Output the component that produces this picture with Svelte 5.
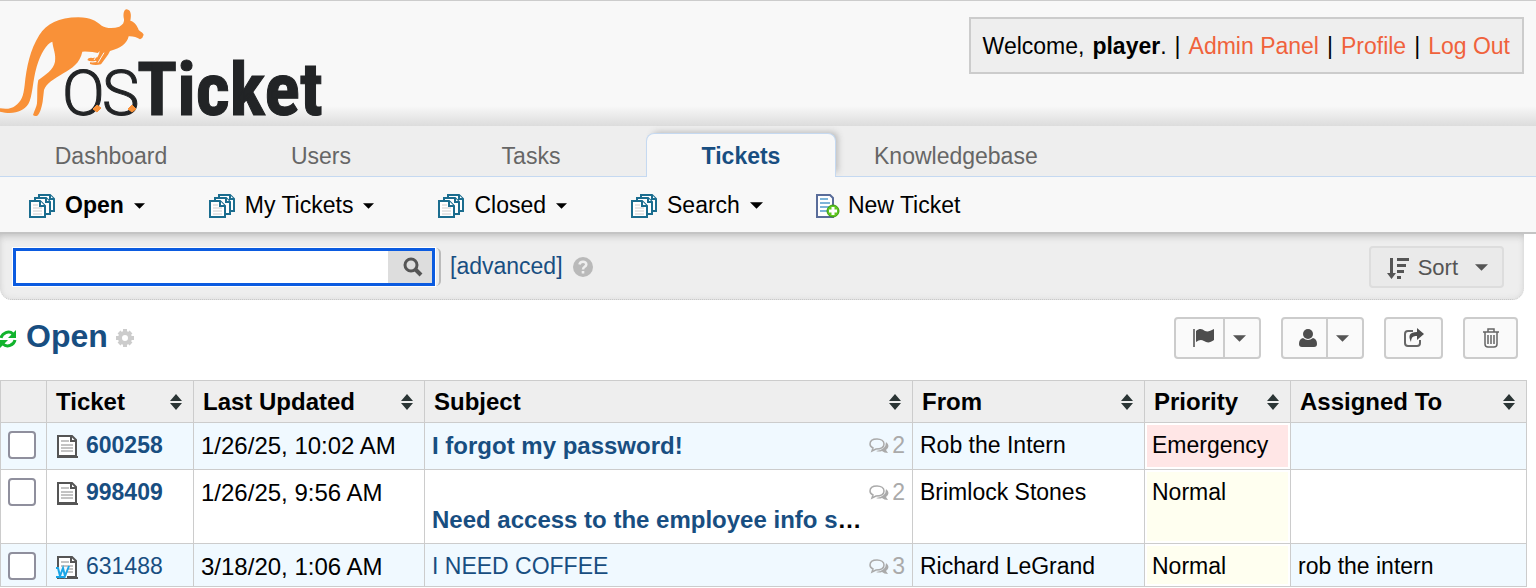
<script>
  // Staff panel: ticket queue view.
  const tabs = ["Dashboard", "Users", "Tasks", "Tickets", "Knowledgebase"];
  const activeTab = "Tickets";

  const queues = [
    { name: "Open", active: true },
    { name: "My Tickets" },
    { name: "Closed" },
    { name: "Search", big: true },
  ];

  const columns = [
    { key: "ticket", label: "Ticket" },
    { key: "updated", label: "Last Updated" },
    { key: "subject", label: "Subject" },
    { key: "from", label: "From" },
    { key: "priority", label: "Priority" },
    { key: "assigned", label: "Assigned To" },
  ];

  const tickets = [
    { number: "600258", updated: "1/26/25, 10:02 AM", subject: "I forgot my password!", thread: 2, from: "Rob the Intern", priority: "Emergency", assigned: "", unanswered: true },
    { number: "998409", updated: "1/26/25, 9:56 AM", subject: "Need access to the employee info s", cut: true, thread: 2, from: "Brimlock Stones", priority: "Normal", assigned: "", unanswered: true },
    { number: "631488", updated: "3/18/20, 1:06 AM", subject: "I NEED COFFEE", thread: 3, from: "Richard LeGrand", priority: "Normal", assigned: "rob the intern", unanswered: false },
  ];

  let query = $state("");
  let selected = $state([]);
</script>

{#snippet caret(big)}
  <svg class="caret" class:big viewBox="0 0 12 6" aria-hidden="true"><path d="M0 0h12L6 6z" fill="currentColor" /></svg>
{/snippet}

{#snippet pages()}
  <svg class="queue-icon" viewBox="0 0 26 26" aria-hidden="true">
    <g fill="#fff" stroke="#1b6d8f" stroke-width="2">
      <path d="M10 2h11l4 4v12H10z" />
      <path d="M21 2v4h4" />
      <path d="M6 5h11l4 4v12H6z" />
      <path d="M17 5v4h4" />
      <path d="M1 8h10l5 5v11H1z" />
      <path d="M11 8v5h5" />
    </g>
    <path d="M4 12h5M4 15h9M4 18h9M4 21h9" stroke="#ccc" />
  </svg>
{/snippet}

<header>
  <a class="logo" href="#home" aria-label="osTicket">
    <svg width="325" height="120" viewBox="0 1 325 120">
      <svg width="325" height="120" viewBox="0 0 975 360">
        <path
          fill="#f99138"
          d="M0 325Q30 330 45 318C65 303 70 290 74 255C80 200 90 150 118 105C140 72 175 52 235 52C275 53 285 62 305 77C320 86 340 86 358 80Q374 72 372 58C368 42 372 28 380 28C392 30 395 42 391 62C405 66 412 78 416 90C424 96 430 100 431 104Q429 114 420 118C410 112 398 108 386 109C382 130 362 145 330 153C325 165 312 180 303 193Q285 198 270 192L270 187Q282 188 290 186L288 182Q270 186 262 180Q264 172 278 174L292 172L298 160Q275 154 247 155C240 190 215 205 190 220C160 238 140 250 132 270L128 305C124 325 120 340 112 347Q104 350 99 345C104 330 110 320 111 310C113 290 110 260 115 240C135 225 160 210 165 185C168 160 160 150 157 125C140 130 122 160 110 200C98 240 98 290 85 312C70 335 40 345 0 335Z"
        />
        <path d="M298 155L282 180M312 158L294 188" stroke="#f8f8f8" stroke-width="3" fill="none" />
      </svg>
      <text class="logo-thin" x="62" y="115">O</text>
      <text class="logo-thin" x="102" y="115">S</text>
      <text class="logo-bold" x="137" y="115">Ticket</text>
      <path d="M97 105l4 3-4 4-4-3zM132 105l4 4-4 3-4-3z" fill="#f99138" stroke="#f99138" />
    </svg>
  </a>
  <div class="account">
    <span>Welcome,</span>
    <span><strong>player</strong>.</span>
    <span>|</span>
    <a href="#admin">Admin Panel</a>
    <span>|</span>
    <a href="#profile">Profile</a>
    <span>|</span>
    <a href="#logout">Log Out</a>
  </div>
</header>

<nav class="tabs">
  {#each tabs as tab}
    <a href="#{tab}" class:active={tab === activeTab}>{tab}</a>
  {/each}
</nav>

<nav class="queues">
  {#each queues as q}
    <a href="#{q.name}" class:current={q.active}>
      {@render pages()}<span>{q.name}</span>{@render caret(q.big)}
    </a>
  {/each}
  <a class="new" href="#new">
    <svg class="queue-icon" viewBox="0 0 26 26" aria-hidden="true">
      <path d="M2 2h13l3 3v19H2z" fill="#fff" stroke="#5a6d9a" stroke-width="2" />
      <path d="M5 6h8M5 10h10M5 14h9M5 18h7" stroke="#7db4d8" stroke-width="2" />
      <circle cx="18" cy="18" r="6" fill="#5fc71e" stroke="#3d9a10" />
      <path d="M18 14v8M14 18h8" stroke="#fff" stroke-width="3" />
    </svg>
    <span>New Ticket</span>
  </a>
</nav>

<main>
  <section class="search-bar">
    <form class="search-box" onsubmit={(e) => e.preventDefault()}>
      <div class="field">
        <input type="text" aria-label="Search tickets" bind:value={query} />
        <button type="submit" aria-label="Search">
          <svg width="20" height="20" viewBox="0 0 20 20"><circle cx="8" cy="8" r="6" fill="none" stroke="#555" stroke-width="3" /><path d="M12 12l6 6" stroke="#555" stroke-width="4" /></svg>
        </button>
      </div>
    </form>
    <a href="#advanced">[advanced]</a>
    <svg class="help" width="20" height="20" viewBox="0 0 20 20" aria-hidden="true">
      <circle cx="10" cy="10" r="10" fill="#b9b9b9" />
      <path d="M6.500 7.500C7 3.500 13.500 4 13.300 7.500C13 10 10 9.500 10 12.500" fill="none" stroke="#eee" stroke-width="2.500" />
      <path d="M8.700 14h2.600v2.500H8.700z" fill="#eee" />
    </svg>
    <button class="sort">
      <svg width="22" height="24" viewBox="0 0 22 24" aria-hidden="true">
        <path d="M3 2h3v15h3l-4.500 6L0 17h3z" fill="#555" />
        <path d="M10 2h12v3H10zM10 8h9v3h-9zM10 14h7v3h-7zM10 20h4v3h-4z" fill="#555" />
      </svg>
      <span>Sort</span>{@render caret(true)}
    </button>
  </section>

  <section class="title-bar">
    <a class="refresh" href="#refresh" aria-label="Refresh">
      <svg width="18" height="20" viewBox="0 0 18 20">
        <path d="M1 9C2 4 9 1 13 5M15 11C14 16 7 19 3 15" fill="none" stroke="#12b32d" stroke-width="3" />
        <path d="M16 1v8H8zM0 19v-8h8z" fill="#12b32d" />
      </svg>
    </a>
    <h2><a href="#open">Open</a></h2>
    <svg class="gear" width="18" height="18" viewBox="0 0 18 18" aria-hidden="true">
      <circle cx="9" cy="9" r="5" fill="none" stroke="#ccc" stroke-width="4" />
      <path d="M9 0v4M9 14v4M0 9h4M14 9h4M3 3l3 3M12 12l3 3M3 15l3-3M12 6l3-3" stroke="#ccc" stroke-width="4" />
    </svg>
    <div class="actions">
      <div class="group">
        <button class="flag" aria-label="Change status">
          <svg width="22" height="20" viewBox="0 0 22 20"><path d="M1 1h2v18H1z" fill="#777" /><path d="M4 3C8 0 10 1 13 3C16 4 18 3 22 1V12C18 15 15 15 12 13C9 11 7 12 4 14z" fill="#4d4d4d" /></svg>
        </button>
        <button class="drop" aria-label="Status options">{@render caret(true)}</button>
      </div>
      <div class="group">
        <button class="user" aria-label="Assign">
          <svg width="18" height="20" viewBox="0 0 18 20"><circle cx="9" cy="6" r="5" fill="#4d4d4d" /><path d="M4 10Q9 14 14 10Q18 11 18 16Q18 19 15 19H3Q0 19 0 16Q0 11 4 10z" fill="#4d4d4d" /></svg>
        </button>
        <button class="drop" aria-label="Assign options">{@render caret(true)}</button>
      </div>
      <div class="group">
        <button class="share" aria-label="Transfer">
          <svg width="20" height="20" viewBox="0 0 20 20"><path d="M9 3H4Q1 3 1 6V15Q1 18 4 18H13Q16 18 16 15V12" fill="none" stroke="#666" stroke-width="2" /><path d="M13 0l7 6-7 6V8Q7 7 7 14Q2 4 13 4z" fill="#4d4d4d" /></svg>
        </button>
      </div>
      <div class="group">
        <button class="trash" aria-label="Delete">
          <svg width="16" height="20" viewBox="0 0 16 20"><path d="M0 4h16M5 4V1h6v3M2 4v12q0 3 3 3h6q3 0 3-3V4M5 7v9M8 7v9M11 7v9" fill="none" stroke="#666" stroke-width="1.500" /></svg>
        </button>
      </div>
    </div>
  </section>

  <table>
    <colgroup>
      <col class="c-check" />
      {#each columns as c}<col class="c-{c.key}" />{/each}
    </colgroup>
    <thead>
      <tr>
        <th></th>
        {#each columns as c}
          <th>
            <div class="head">
              {c.label}
              <svg width="12" height="16" viewBox="0 0 12 16" aria-hidden="true"><path d="M0 7l6-7 6 7zM0 9h12l-6 7z" fill="#2b3535" /></svg>
            </div>
          </th>
        {/each}
      </tr>
    </thead>
    <tbody>
      {#each tickets as t}
        <tr class:unanswered={t.unanswered}>
          <td class="check"><input type="checkbox" aria-label="Select ticket {t.number}" value={t.number} bind:group={selected} /></td>
          <td>
            <a class="number" href="#{t.number}">
              <svg width="24" height="24" viewBox="0 0 24 24" aria-hidden="true">
                <path d="M2 2h14l4 4v16H2z" fill="#fff" stroke="#555" stroke-width="2" />
                <path d="M1 23h21" stroke="#555" stroke-width="2" />
                <path d="M15 2v5h5" fill="none" stroke="#555" stroke-width="2" />
                <path d="M5 7h8M5 11h12M5 14h12M5 17h12" stroke="#888" />
                {#if !t.unanswered}
                  <path d="M0 12h11v11H0z" fill="#f0f9ff" />
                  <path d="M-1 13h3l2 8 3-8 2 8 4-10M0 22h9" fill="none" stroke="#1aa5e6" stroke-width="2" />
                {/if}
              </svg>
              {t.number}
            </a>
          </td>
          <td class="updated">{t.updated}</td>
          <td>
            <div class="subject" class:cut={t.cut}>
              <span class="text"><a href="#{t.number}">{t.subject}</a>{#if t.cut}…{/if}</span>
              <span class="thread">
                <svg width="20" height="18" viewBox="0 0 20 18" aria-hidden="true">
                  <path d="M17 5Q22 9 17 13L19 16Q15 16 13 14Q10 15 7 14Q17 13 17 5z" fill="#aaa" />
                  <path d="M8 2C3 2 1 4 1 7C1 9 2 10 4 11L3 14L7 12C12 12 15 10 15 7C15 4 12 2 8 2z" fill="none" stroke="#aaa" stroke-width="1.500" />
                </svg>
                {t.thread}
              </span>
            </div>
          </td>
          <td>{t.from}</td>
          <td class="priority {t.priority.toLowerCase()}">{t.priority}</td>
          <td>{t.assigned}</td>
        </tr>
      {/each}
    </tbody>
  </table>
</main>

<style>
  :global(body) { background: #fff; color: #000; font: 23px/27px "Liberation Sans", Arial, sans-serif; }
  a { color: #184e81; text-decoration: none; }
  button { font: inherit; color: #555; cursor: pointer; padding: 0; border: 0; }
  svg { flex: none; }

  header { display: flex; justify-content: space-between; align-items: flex-start; height: 125px; padding-right: 12px; border-top: 1px solid #ccc; background: linear-gradient(#f8f8f8 84%, #dcdcdc); }
  .logo svg { display: block; overflow: visible; }
  .logo-thin { font: 300 63px Roboto, sans-serif; fill: #222426; stroke: #222426; }
  .logo-bold { font: bold 74px "Roboto Condensed", Roboto, sans-serif; fill: #222426; stroke: #222426; }
  .account { display: flex; gap: 8px; margin-top: 16px; padding: 14px 12px 12px; border: 2px solid #ccc; background: #eee; white-space: nowrap; }
  .account a { color: #f0623c; }

  .tabs { display: flex; gap: 20px; height: 43px; padding: 7px 16px 0; background: #eee; border-bottom: 1px solid #c5d9f1; }
  .tabs a { min-width: 190px; box-sizing: border-box; padding: 10px 18px 0; text-align: center; color: #666; }
  .tabs a.active { height: 44px; padding-top: 9px; border: 1px solid #c5d9f1; border-bottom: 0; border-radius: 8px 8px 0 0; background: #f8f8f8; color: #184e81; font-weight: bold; box-shadow: 4px -3px 6px -2px #bbb; clip-path: inset(-10px -10px 0 -10px); }

  .queues { display: flex; gap: 64px; height: 53px; padding: 2px 29px 0; align-items: center; background: #f8f8f8; border-bottom: 2px solid #c4c4c4; }
  .queues a { display: flex; align-items: center; gap: 10px; color: #000; white-space: nowrap; }
  .queues .current { font-weight: bold; }
  .queues .new { margin-left: -12px; gap: 7px; }
  .queue-icon { width: 26px; height: 26px; }
  .caret { width: 11px; height: 6px; }
  .caret.big { width: 13px; height: 7px; }

  main { padding-right: 9px; }
  .search-bar { display: flex; align-items: center; height: 65px; margin-right: 3px; padding: 0 20px 0 13px; background: #eee; border-bottom: 1px dotted #bbb; border-radius: 0 0 12px 12px; box-shadow: inset 0 5px 8px -4px #bbb, inset 0 0 6px #ddd; }
  .search-box { padding-right: 4px; border-right: 2px solid #bbb; border-radius: 5px; }
  .field { display: flex; width: 416px; height: 32px; border: 3px solid #0b5be0; outline: 1px solid #fff; background: #fff; }
  .field input { flex: 1; min-width: 0; border: 0; padding: 0 8px; outline: none; font: inherit; background: #fff; }
  .field button { width: 44px; padding-left: 6px; background: #ddd; }
  .field svg { display: block; margin: auto; }
  .search-bar > a { margin-left: 9px; }
  .help { margin-left: 10px; }
  .sort { display: flex; align-items: center; gap: 9px; height: 42px; margin-left: auto; padding: 2px 14px 0 16px; border: 2px solid #ddd; border-radius: 4px; background: #eaeaea; font-size: 22px; }
  .sort .caret { margin-left: 8px; }

  .title-bar { display: flex; align-items: center; height: 76px; padding: 0 9px 4px 0; }
  .refresh { height: 20px; overflow: hidden; }
  h2 { margin: 0 8px; padding-bottom: 4px; font-size: 32px; line-height: 36px; }
  .actions { display: flex; gap: 20px; margin-left: auto; }
  .group { display: flex; height: 38px; border: 2px solid #ccc; border-radius: 4px; background: #fafafa; }
  .group button { background: none; }
  .group button svg { display: block; margin: auto; }
  .group .flag { width: 47px; padding-left: 6px; }
  .group .user { width: 43px; padding-left: 6px; }
  .group .drop { width: 36px; padding-right: 6px; border-left: 2px solid #ccc; }
  .group .share { width: 55px; }
  .group .trash { width: 51px; }

  table { width: 100%; table-layout: fixed; border-collapse: collapse; }
  .c-check { width: 46px; }
  .c-ticket { width: 147px; }
  .c-updated { width: 231px; }
  .c-from { width: 232px; }
  .c-priority { width: 146px; }
  .c-assigned { width: 236px; }
  th, td { border: 1px solid #ccc; vertical-align: top; text-align: left; white-space: nowrap; }
  th { padding: 7px 11px 7px 9px; background: #eee; font-size: 24px; }
  .head { display: flex; align-items: center; justify-content: space-between; }
  td { padding: 9px 7px 10px; }
  tbody tr:nth-child(odd) td { background: #f0f9ff; }
  tbody tr:last-child td { padding-bottom: 6px; }
  .check input { appearance: none; display: block; width: 28px; height: 28px; margin: -1px 0 0; border: 2px solid #8f8f9d; border-radius: 4px; background: #fff; }
  .number { display: flex; align-items: center; gap: 6px; padding-left: 2px; }
  .updated { font-size: 24px; }
  .unanswered a { font-weight: bold; }
  .subject { display: flex; justify-content: space-between; }
  .unanswered .text { font-size: 24px; }
  .subject.cut { flex-wrap: wrap; }
  .cut .text { order: 2; flex-basis: 100%; font-weight: bold; }
  .cut .thread { margin-left: auto; }
  .thread { display: flex; align-items: center; gap: 3px; color: #aaa; }
  tbody tr .priority { box-shadow: inset 0 0 0 2px #fff; }
  tbody tr .priority.emergency { background: #ffe6e6; }
  tbody tr .priority.normal { background: #fffff0; }
</style>
